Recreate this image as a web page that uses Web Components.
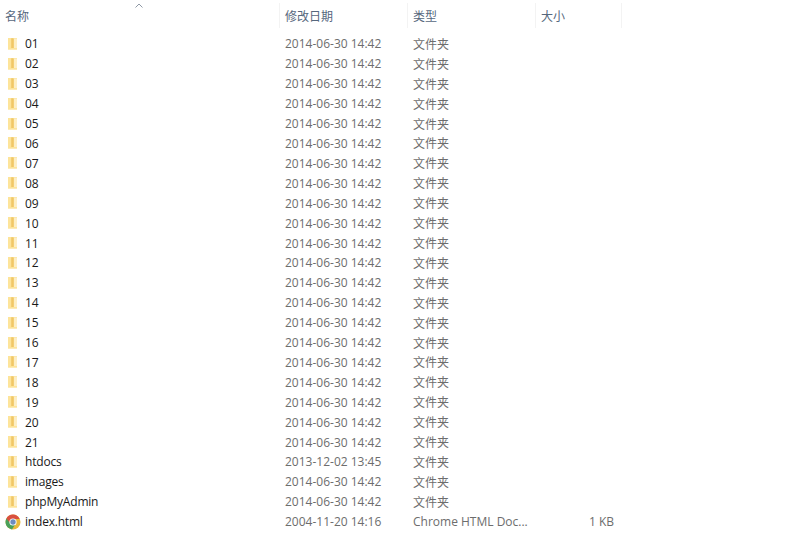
<!DOCTYPE html>
<html><head><meta charset="utf-8"><style>
html,body{margin:0;padding:0;background:#fff;overflow:hidden}
</style></head><body>
<template id="hdr"><style>
:host{display:grid;grid-template-columns:280px 128px 128px 86px;height:28px;width:622px;position:relative;font:12px "Open Sans","Noto Sans CJK SC",sans-serif;color:#56677d}
.c{box-sizing:border-box;padding:0 0 0 5px;display:flex;align-items:center;border-right:1px solid #f3f3f3;height:25px;margin-top:3px}
svg{position:absolute;left:135px;top:3px}
</style>
<div class="c">名称</div><div class="c">修改日期</div><div class="c">类型</div><div class="c">大小</div>
<svg width="8" height="5" viewBox="0 0 8 5"><path d="M.5 4.500 4 1l3.500 3.500" fill="none" stroke="#8e98a5" stroke-width="1"/></svg>
</template>
<template id="row"><style>
:host{display:grid;grid-template-columns:280px 128px 122px 84px;height:19.92px;width:614px;align-items:center;font:12px "Open Sans","Noto Sans CJK SC",sans-serif;color:#6d6d6d}
.n{display:flex;align-items:center;color:#1a1a1a;padding-left:5px;letter-spacing:-.2px}
.i{width:20px;height:16px;flex:none;display:flex;align-items:center}
.d{padding-left:5px;white-space:nowrap}
.t{padding-left:5px;white-space:nowrap}
.s{text-align:right;white-space:nowrap}
</style>
<div class="n"><span class="i"><slot name="icon"></slot></span><span><slot></slot></span></div>
<div class="d"></div><div class="t"></div><div class="s"></div>
</template>
<template id="folder"><style>:host{display:block;width:14px;height:14px}svg{display:block}</style>
<svg width="14" height="14" viewBox="0 0 14 14"><path d="M3 1h9v11.500H3z" fill="#fce7a6"/><path d="M3 1h3.200v9.500l3 .5h2.800v1.500H3z" fill="#fde49a"/><path d="M6.200 1.200h1.700l1 .6v9.200h-2.700z" fill="#f1c766"/><path d="M8.900 1.800H12V11H8.900z" fill="#fdeec4"/></svg>
</template>
<template id="chrome"><style>:host{display:block;width:16px;height:16px}svg{display:block}</style>
<svg width="16" height="16" viewBox="0 0 16 16"><circle cx="8" cy="8" r="7.500" fill="#e8b93b"/><path d="M8 .5A7.500 7.500 0 0 0 1.300 4.600L4.600 9.800 5 8a3 3 0 0 1 3-3h6.600A7.500 7.500 0 0 0 8 .5z" fill="#d9503f"/><path d="M1.300 4.600A7.500 7.500 0 0 0 7 15.400L10.300 10.200 8 11A3 3 0 0 1 5.300 9.300z" fill="#4aa05a"/><circle cx="8" cy="8" r="3.600" fill="#fff"/><circle cx="8" cy="8" r="2.700" fill="#6d8cc0"/></svg>
</template>
<template id="app"><style>:host{display:block;width:800px;height:556px;background:#fff;overflow:hidden}.rows{padding-top:6px}</style>
<file-header></file-header><div class="rows"><slot></slot></div></template>
<file-app id="a"></file-app>
<script>
function tpl(id){return document.getElementById(id).content.cloneNode(true)}
class Simple extends HTMLElement{constructor(){super();this.attachShadow({mode:'open'}).appendChild(tpl(this.constructor.t))}}
class FileHeader extends Simple{static t='hdr'}
class FolderIcon extends Simple{static t='folder'}
class ChromeIcon extends Simple{static t='chrome'}
class FileApp extends Simple{static t='app'}
class FileRow extends Simple{static t='row';
connectedCallback(){const r=this.shadowRoot;
r.querySelector('.d').textContent=this.getAttribute('date');
r.querySelector('.t').textContent=this.getAttribute('type');
r.querySelector('.s').textContent=this.getAttribute('size')||'';}}
customElements.define('file-header',FileHeader);
customElements.define('folder-icon',FolderIcon);
customElements.define('chrome-icon',ChromeIcon);
customElements.define('file-row',FileRow);
customElements.define('file-app',FileApp);
const names=[];for(let i=1;i<=21;i++)names.push(String(i).padStart(2,'0'));names.push('htdocs','images','phpMyAdmin');
const a=document.getElementById('a');
function add(n,d,t,s,ic){const e=document.createElement('file-row');e.setAttribute('date',d);e.setAttribute('type',t);if(s)e.setAttribute('size',s);
const i=document.createElement(ic);i.slot='icon';e.appendChild(i);e.appendChild(document.createTextNode(n));a.appendChild(e)}
names.forEach(n=>add(n,n==='htdocs'?'2013-12-02 13:45':'2014-06-30 14:42','文件夹','', 'folder-icon'));
add('index.html','2004-11-20 14:16','Chrome HTML Doc...','1 KB','chrome-icon');
</script></body></html>
